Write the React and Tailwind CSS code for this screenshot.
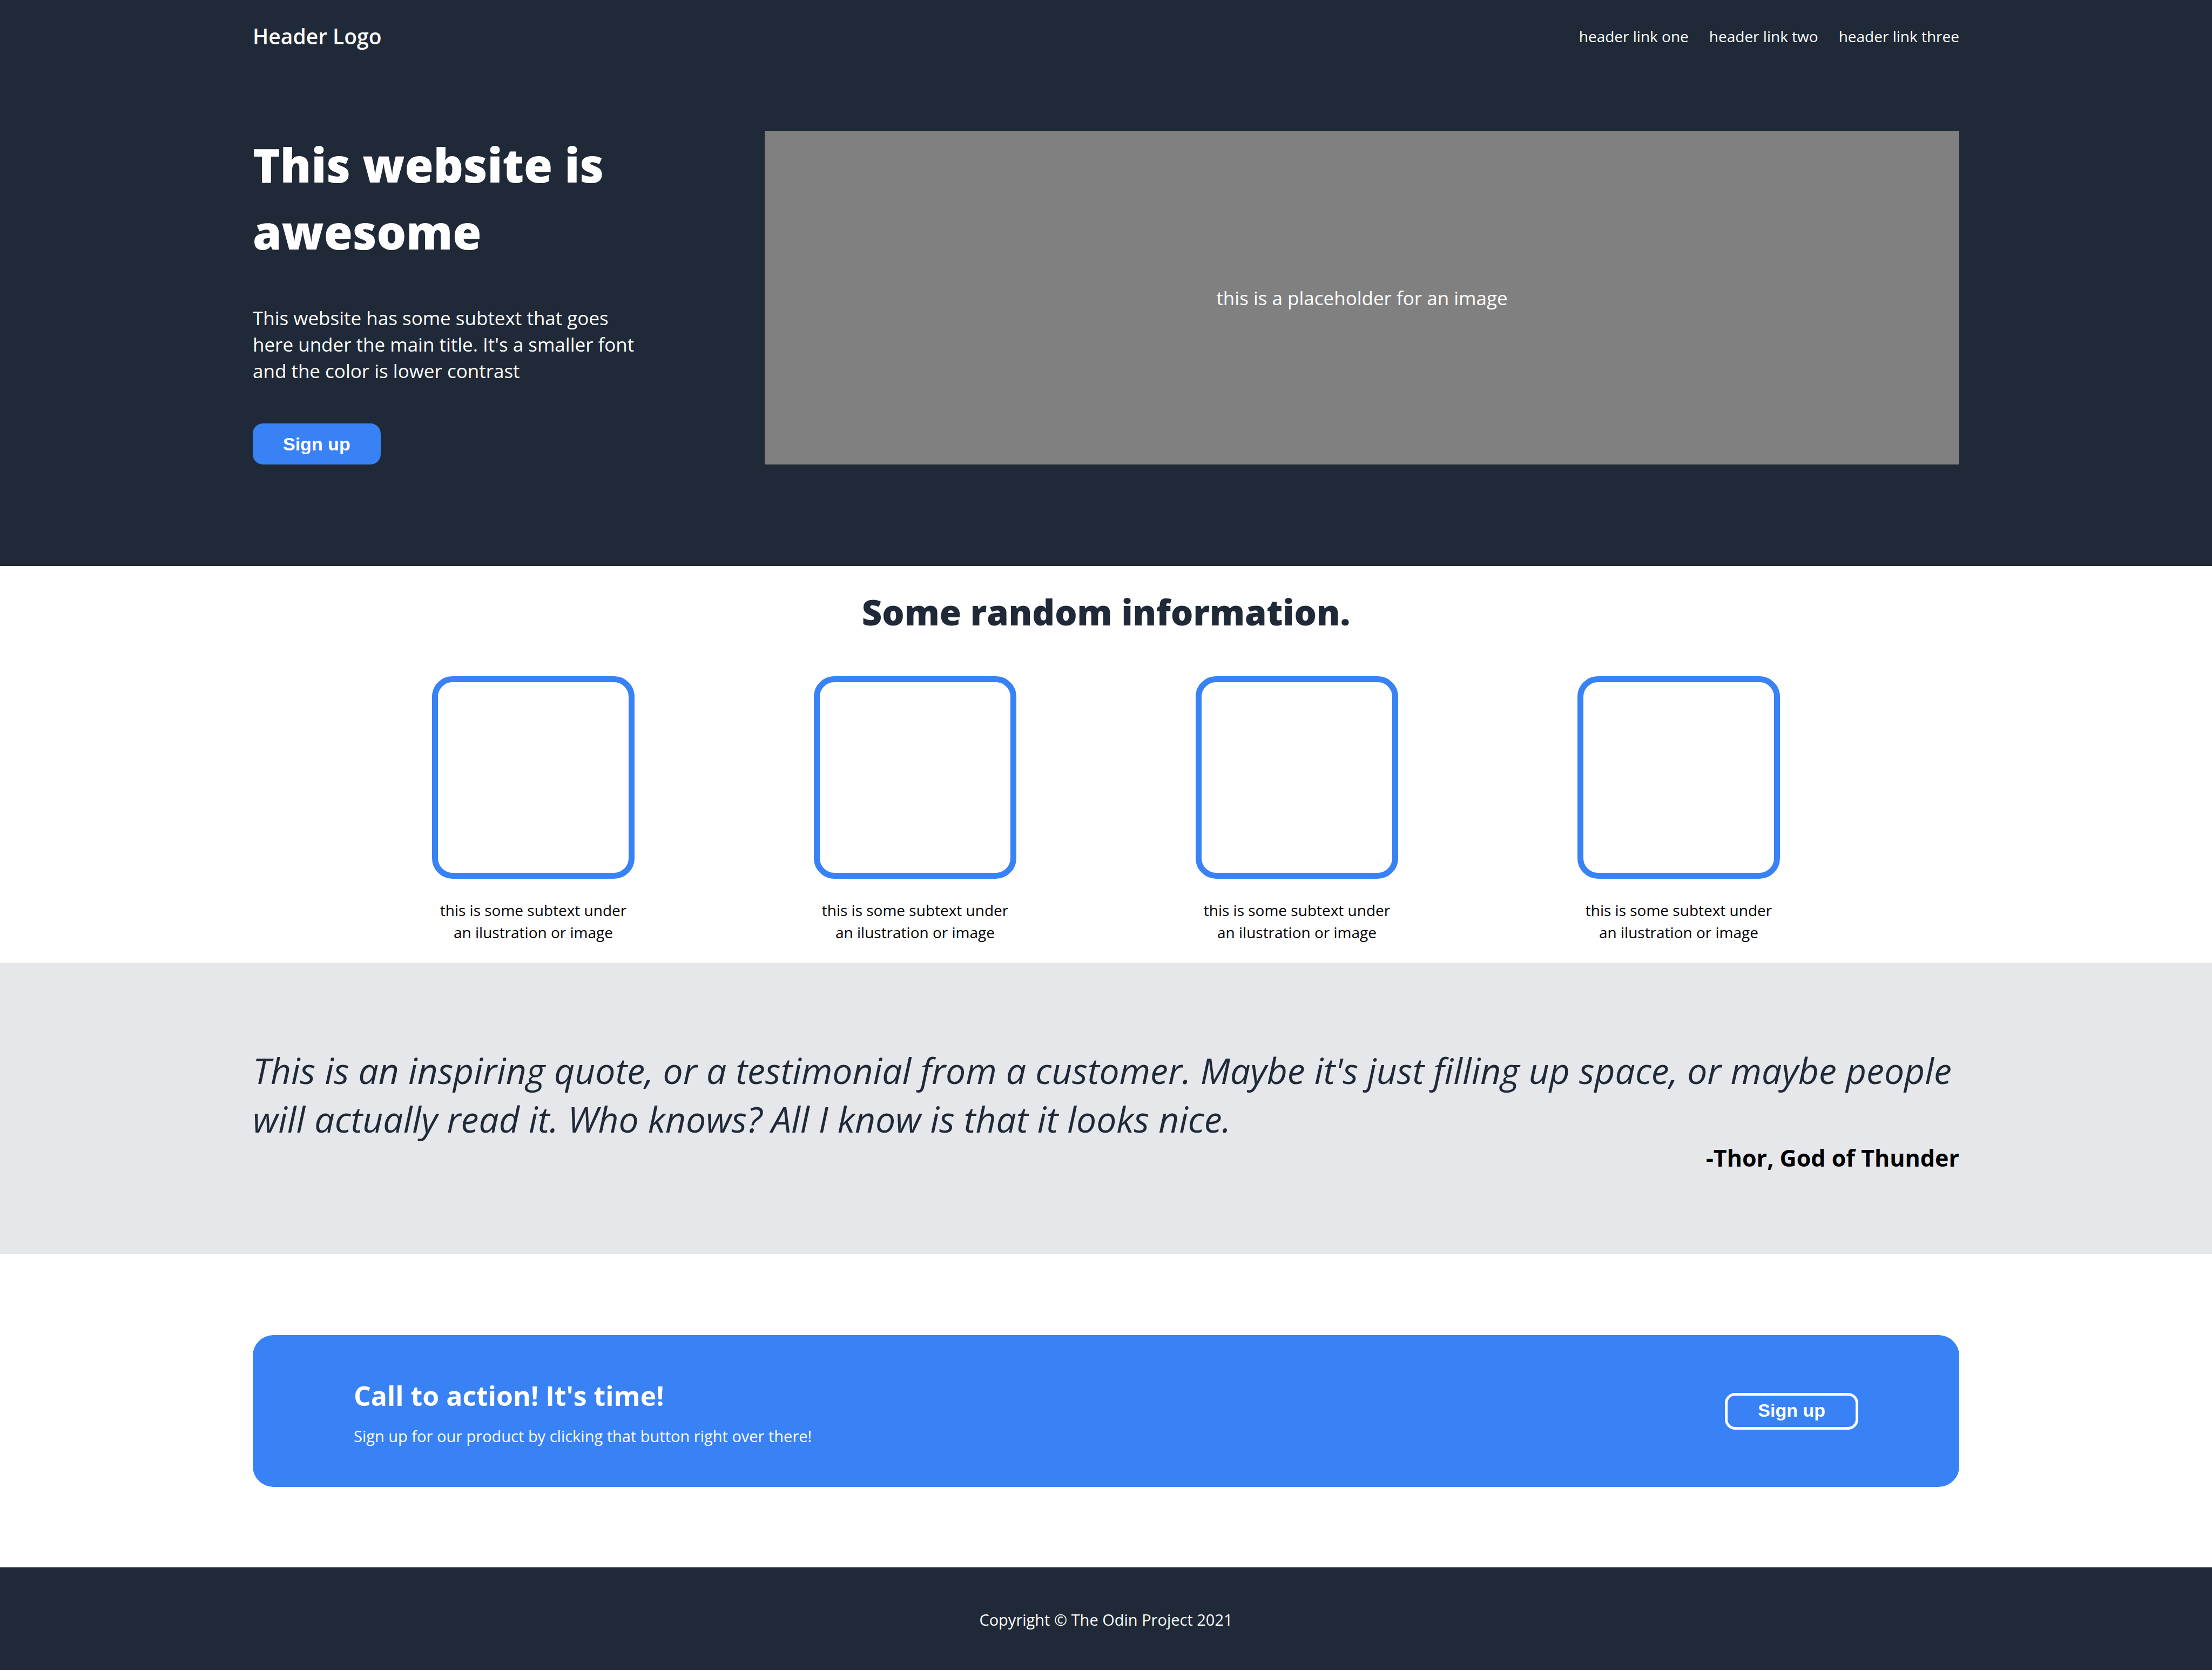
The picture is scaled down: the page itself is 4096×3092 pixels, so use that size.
const navLinks = ["header link one", "header link two", "header link three"];
const cards = [1, 2, 3, 4];

function Container({ className = "", children }) {
  return <div className={`mx-auto w-full max-w-[3160px] ${className}`}>{children}</div>;
}

function Hero() {
  return (
    <div className="bg-[#1f2937] pt-10 pb-[188px] text-white">
      <Container>
        <header className="flex items-center justify-between">
          <div className="text-[39px] leading-[54px] font-semibold text-[#f9faf8]">Header Logo</div>
          <nav className="flex gap-[38px] text-[28px] leading-[40px]">
            {navLinks.map((label) => (
              <a key={label} href="#">{label}</a>
            ))}
          </nav>
        </header>
        <section className="mt-[149px] flex">
          <div className="flex w-[30%] flex-col items-start gap-[73px] pr-[216px]">
            <h1 className="text-[86px] leading-[124px] font-black">This website is awesome</h1>
            <p className="text-[35px] leading-[49px]">
              This website has some subtext that goes here under the main title. It's a smaller font and the color is lower contrast
            </p>
            <button className="h-[76px] rounded-[19px] bg-[#3882f6] px-[56px] font-['Liberation_Sans',sans-serif] text-[34px] font-bold">
              Sign up
            </button>
          </div>
          <div className="flex w-[70%] items-center justify-center bg-[#808080] text-[35px] leading-[49px]">
            this is a placeholder for an image
          </div>
        </section>
      </Container>
    </div>
  );
}

function Information() {
  return (
    <section className="bg-white pt-[39px] pb-[36px]">
      <h2 className="text-center text-[65px] leading-[92px] font-black text-[#1f2937]">Some random information.</h2>
      <div className="mt-[73px] flex justify-center gap-[332px]">
        {cards.map((id) => (
          <div key={id} className="w-[375px]">
            <div className="h-[375px] rounded-[38px] border-[11px] border-[#3882f6]" />
            <p className="mt-[38px] text-center text-[28px] leading-[41px] text-black">
              this is some subtext under an ilustration or image
            </p>
          </div>
        ))}
      </div>
    </section>
  );
}

function Quote() {
  return (
    <section className="bg-[#e5e7eb] pt-[153px] pb-[150px]">
      <Container>
        <blockquote className="text-[66px] leading-[90px] text-[#1f2937] italic">
          This is an inspiring quote, or a testimonial from a customer. Maybe it's just filling up space, or maybe people will actually read it. Who knows? All I know is that it looks nice.
        </blockquote>
        <p className="text-right text-[43px] leading-[56px] font-bold text-black">-Thor, God of Thunder</p>
      </Container>
    </section>
  );
}

function CallToAction() {
  return (
    <section className="bg-white pt-[150px] pb-[149px]">
      <Container className="flex items-center justify-between rounded-[38px] bg-[#3882f6] px-[187px] pt-[75px] pb-[74px] text-white">
        <div>
          <h3 className="text-[50px] leading-[74px] font-bold">Call to action! It's time!</h3>
          <p className="mt-[18px] text-[29px] leading-[40px]">Sign up for our product by clicking that button right over there!</p>
        </div>
        <button className="h-[68px] rounded-[19px] border-[5px] border-white px-[56px] pb-1 font-['Liberation_Sans',sans-serif] text-[34px] font-bold">
          Sign up
        </button>
      </Container>
    </section>
  );
}

export default function App() {
  return (
    <div className="flex min-h-screen flex-col font-['Open_Sans','Noto_Sans',sans-serif]">
      <Hero />
      <Information />
      <Quote />
      <CallToAction />
      <footer className="grow bg-[#1f2937] pt-[77px] pb-[72px] text-center text-[29px] leading-[40px] text-white">
        Copyright © The Odin Project 2021
      </footer>
    </div>
  );
}
